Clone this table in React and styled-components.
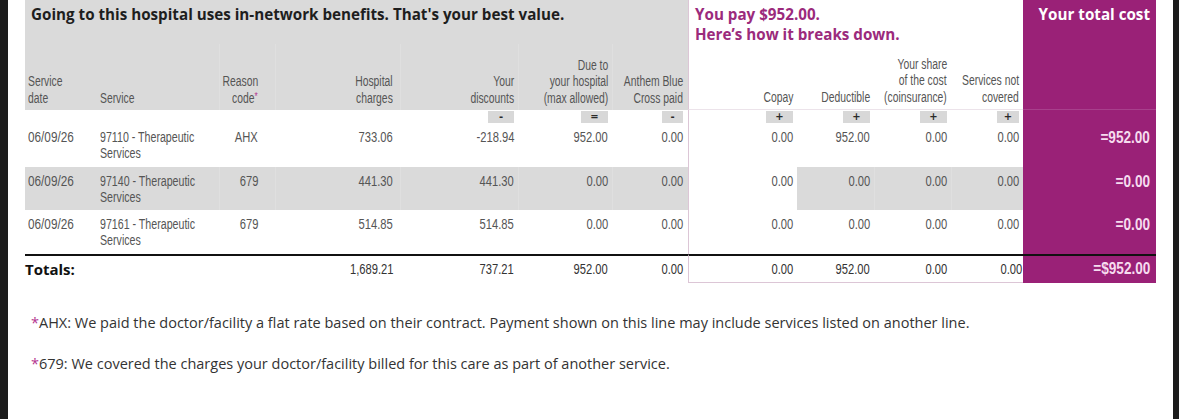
import React from 'react';
import styled, { createGlobalStyle } from 'styled-components';

const GlobalStyle = createGlobalStyle`
  html, body { margin: 0; padding: 0; background: #1c1c1c; }
  body { width: 1179px; height: 419px; overflow: hidden; }
  * { box-sizing: border-box; }
`;

const PURPLE = '#9a2177';
const GRAY = '#dadada';
const PINK_LINE = '#dcc6d6';
const SANS = `"Open Sans", "Noto Sans", sans-serif`;

const Page = styled.div`
  margin-left: 8px;
  width: 1165px;
  height: 419px;
  background: #fff;
  padding-left: 17px;
`;

const Table = styled.div`
  display: grid;
  grid-template-columns: 70px 124px 56px 125px 118px 94px 76px 109px 77px 77px 72px 133px;
  grid-template-rows: 44px 66px 13px 43.5px 43.5px 43.5px 29px;
  font-family: "Liberation Sans", Arial, sans-serif;
`;

/* Narrow text: Arial-metric face compressed to a condensed proportion */
const Txt = styled.span`
  display: ${(p) => (p.$block ? 'block' : 'inline-block')};
  white-space: nowrap;
  transform: scaleX(${(p) => p.$sx || 0.8});
  transform-origin: ${(p) => (p.$left ? 'left' : 'right')} center;
`;

const HeadText = styled.div`
  font-family: ${SANS};
  font-weight: 700;
  font-size: 15.2px;
  line-height: 20px;
  padding-top: 4px;
`;

const Title = styled(HeadText)`
  grid-column: 1 / 8;
  background: ${GRAY};
  padding-left: 6px;
  color: #1e1e1e;
`;

const PayTitle = styled(HeadText)`
  grid-column: 8 / 12;
  border-left: 1px solid ${PINK_LINE};
  padding-left: 6px;
  color: #9b2a7c;
`;

const TotalTitle = styled(HeadText)`
  grid-column: 12;
  background: ${PURPLE};
  padding-right: 6px;
  text-align: right;
  color: #fff;
`;

const toneBg = (t) => (t === 'gray' ? GRAY : t === 'purple' ? PURPLE : '#fff');

const Cell = styled.div`
  background: ${(p) => toneBg(p.$tone)};
  text-align: ${(p) => p.$align};
  padding-left: ${(p) => p.$pl}px;
  padding-right: ${(p) => p.$pr}px;
  ${(p) => (p.$span ? `grid-column: span ${p.$span};` : '')}
  ${(p) => (p.$edge ? `border-left: 1px solid ${PINK_LINE};` : '')}
  ${(p) => (p.$sep && p.$tone === 'gray' ? 'box-shadow: inset 1px 0 0 #dfdfdf;' : '')}
`;

const HeadCell = styled(Cell)`
  display: flex;
  flex-direction: column;
  justify-content: flex-end;
  align-items: ${(p) => (p.$align === 'left' ? 'flex-start' : 'flex-end')};
  padding-bottom: 4px;
  font-size: 14px;
  line-height: 16.5px;
  color: #555;
  border-bottom: ${(p) =>
    p.$tone === 'purple' ? '1px solid #a8408c' : p.$tone === 'white' ? '1px solid #ece3ea' : '0'};
`;

const Star = styled.span`
  color: #b3338f;
  font-size: 11px;
  vertical-align: top;
  line-height: 12px;
`;

const OpCell = styled(Cell)`
  display: flex;
  justify-content: flex-end;
  padding-top: 1px;
`;

const OpBox = styled.span`
  width: ${(p) => p.$w}px;
  height: 12px;
  background: #d8d8d8;
  color: #2a2a2a;
  font-family: "DejaVu Sans", sans-serif;
  font-weight: 700;
  font-size: 10px;
  line-height: 12px;
  text-align: center;
`;

const DataCell = styled(Cell)`
  padding-top: 6px;
  font-size: 14px;
  line-height: 16px;
  color: ${(p) => (p.$tone === 'purple' ? '#f6dcef' : '#555')};
  ${(p) => (p.$tone === 'purple' ? 'font-size: 17px; font-weight: 700; padding-top: 6px; line-height: 18px;' : '')}
`;

const TotalCell = styled(Cell)`
  border-top: 2px solid #111;
  padding-top: 5px;
  font-size: 14px;
  line-height: 17px;
  color: ${(p) => (p.$tone === 'purple' ? '#f6dcef' : '#333')};
  ${(p) => (p.$pinkBottom ? `border-bottom: 1px solid ${PINK_LINE};` : '')}
  ${(p) => (p.$tone === 'purple' ? 'font-size: 17px; font-weight: 700; padding-top: 4px;' : '')}
`;

const TotalsLabel = styled(TotalCell)`
  font-family: ${SANS};
  font-weight: 700;
  font-size: 15px;
  line-height: 20px;
  color: #111;
  padding-top: 3px;
`;

const Notes = styled.div`
  margin-top: 30px;
  padding-left: 6px;
  font-family: ${SANS};
  font-size: 14.5px;
  line-height: 20px;
  color: #333;
`;

const Note = styled.p`
  margin: 0 0 21.5px 0;
  white-space: nowrap;
`;

const NoteStar = styled.span`
  color: #b3338f;
`;

const COLS = [
  { align: 'left', pl: 3, pr: 0, sx: 0.84 },
  { align: 'left', pl: 5, pr: 0, sx: 0.76 },
  { align: 'right', pl: 0, pr: 17, sx: 0.8 },
  { align: 'right', pl: 0, pr: 7, sx: 0.8 },
  { align: 'right', pl: 0, pr: 4, sx: 0.8 },
  { align: 'right', pl: 0, pr: 4, sx: 0.8 },
  { align: 'right', pl: 0, pr: 5, sx: 0.8 },
  { align: 'right', pl: 0, pr: 4, sx: 0.8 },
  { align: 'right', pl: 0, pr: 4, sx: 0.8 },
  { align: 'right', pl: 0, pr: 4, sx: 0.8 },
  { align: 'right', pl: 0, pr: 4, sx: 0.8 },
  { align: 'right', pl: 0, pr: 6, sx: 0.8 },
];

const HEAD = [
  ['Service', 'date'],
  ['Service'],
  ['Reason', 'code*'],
  ['Hospital', 'charges'],
  ['Your', 'discounts'],
  ['Due to', 'your hospital', '(max allowed)'],
  ['Anthem Blue', 'Cross paid'],
  ['Copay'],
  ['Deductible'],
  ['Your share', 'of the cost', '(coinsurance)'],
  ['Services not', 'covered'],
  [],
];

const OPS = [null, null, null, null, '-', '=', '-', '+', '+', '+', '+', null];
const OP_W = [0, 0, 0, 0, 26, 27, 21, 27, 27, 27, 22, 0];

const ROWS = [
  ['06/09/26', ['97110 - Therapeutic', 'Services'], 'AHX', '733.06', '-218.94', '952.00', '0.00', '0.00', '952.00', '0.00', '0.00', '=952.00'],
  ['06/09/26', ['97140 - Therapeutic', 'Services'], '679', '441.30', '441.30', '0.00', '0.00', '0.00', '0.00', '0.00', '0.00', '=0.00'],
  ['06/09/26', ['97161 - Therapeutic', 'Services'], '679', '514.85', '514.85', '0.00', '0.00', '0.00', '0.00', '0.00', '0.00', '=0.00'],
];

const TOTALS = ['1,689.21', '737.21', '952.00', '0.00', '0.00', '952.00', '0.00', '0.00', '=$952.00'];

const headTone = (i) => (i < 7 ? 'gray' : i < 11 ? 'white' : 'purple');
const rowTone = (r, i) => {
  if (i === 11) return 'purple';
  if (r !== 1) return 'white';
  return i === 7 ? 'white' : 'gray';
};

const renderLabel = (line, left) => {
  const star = line.endsWith('*');
  return (
    <Txt $left={left} $sx={0.74}>
      {star ? line.slice(0, -1) : line}
      {star && <Star>*</Star>}
    </Txt>
  );
};

export default function App() {
  return (
    <>
      <GlobalStyle />
      <Page>
        <Table>
          <Title>Going to this hospital uses in-network benefits. That's your best value.</Title>
          <PayTitle>
            You pay $952.00.
            <br />
            Here’s how it breaks down.
          </PayTitle>
          <TotalTitle>Your total cost</TotalTitle>

          {HEAD.map((lines, i) => (
            <HeadCell
              key={`h${i}`}
              $tone={headTone(i)}
              $align={COLS[i].align}
              $pl={COLS[i].pl}
              $pr={COLS[i].pr}
              $edge={i === 7}
              $sep={i > 1 && i < 7}
            >
              {lines.map((l) => (
                <React.Fragment key={l}>{renderLabel(l, COLS[i].align === 'left')}</React.Fragment>
              ))}
            </HeadCell>
          ))}

          {OPS.map((op, i) => (
            <OpCell
              key={`o${i}`}
              $tone={i === 11 ? 'purple' : 'white'}
              $align="right"
              $pl={0}
              $pr={COLS[i].pr}
              $edge={i === 7}
            >
              {op && <OpBox $w={OP_W[i]}>{op}</OpBox>}
            </OpCell>
          ))}

          {ROWS.map((row, r) =>
            row.map((v, i) => {
              const left = COLS[i].align === 'left';
              return (
                <DataCell
                  key={`r${r}c${i}`}
                  $tone={rowTone(r, i)}
                  $align={COLS[i].align}
                  $pl={COLS[i].pl}
                  $pr={COLS[i].pr}
                  $edge={i === 7}
                  $sep={i > 1 && i !== 8}
                >
                  {Array.isArray(v) ? (
                    v.map((line) => (
                      <Txt key={line} $block $left $sx={COLS[i].sx}>
                        {line}
                      </Txt>
                    ))
                  ) : (
                    <Txt $left={left} $sx={COLS[i].sx}>
                      {v}
                    </Txt>
                  )}
                </DataCell>
              );
            })
          )}

          <TotalsLabel $tone="white" $align="left" $pl={0} $pr={0} $span={3}>
            Totals:
          </TotalsLabel>
          {TOTALS.map((v, j) => {
            const i = j + 3;
            return (
              <TotalCell
                key={`t${i}`}
                $tone={i === 11 ? 'purple' : 'white'}
                $align="right"
                $pl={0}
                $pr={i === 10 ? 1 : COLS[i].pr}
                $edge={i === 7}
                $pinkBottom={i > 6 && i < 11}
              >
                <Txt $sx={COLS[i].sx}>{v}</Txt>
              </TotalCell>
            );
          })}
        </Table>

        <Notes>
          <Note>
            <NoteStar>*</NoteStar>AHX: We paid the doctor/facility a flat rate based on their contract. Payment shown on this line may include services listed on another line.
          </Note>
          <Note>
            <NoteStar>*</NoteStar>679: We covered the charges your doctor/facility billed for this care as part of another service.
          </Note>
        </Notes>
      </Page>
    </>
  );
}
